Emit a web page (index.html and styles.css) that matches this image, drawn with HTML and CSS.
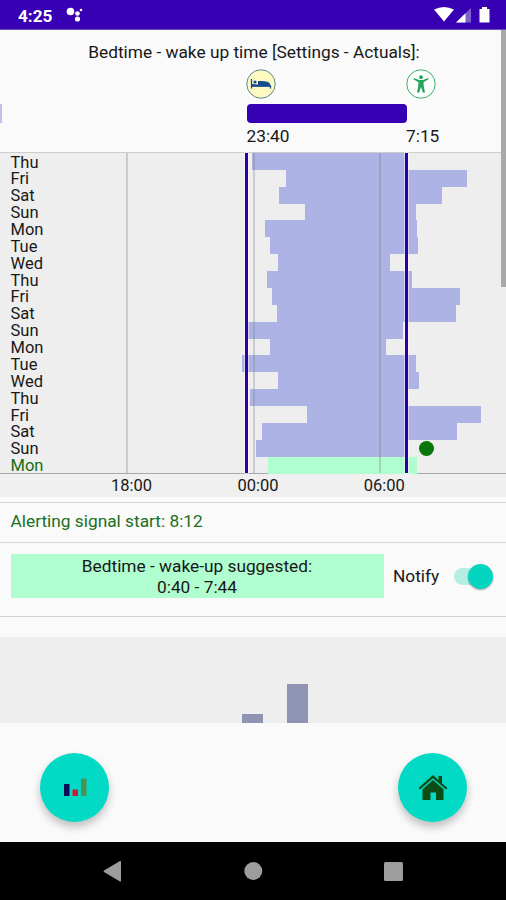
FILE: index.html
```html
<!DOCTYPE html>
<html lang="en">
<head>
<meta charset="utf-8">
<title>Bedtime</title>
<link rel="stylesheet" href="styles.css">
</head>
<body>
<div class="phone">
  <header class="status">
    <span class="clock">4:25</span>
    <svg class="dots" width="18" height="16" viewBox="0 0 18 16" fill="#fff"><circle cx="4.500" cy="4.500" r="3.800"/><circle cx="11.500" cy="6.500" r="2.300"/><circle cx="11.500" cy="12" r="2.600"/><circle cx="15" cy="3" r="1.300"/></svg>
    <svg class="signals" width="58" height="18" viewBox="0 0 58 18"><path d="M0 3.500Q10 -1.500 20 3.500L10 15.500Z" fill="#fff"/><path d="M22 16.500L37 2V16.500Z" fill="#7f5fd0"/><path d="M22 16.500L31.500 7.300V16.500Z" fill="#fff"/><path d="M45.500 3H48V1H53V3H55.500V16.500H45.500Z" fill="#fff"/></svg>
  </header>

  <main class="content">
    <section class="planned">
      <h1 class="title">Bedtime - wake up time [Settings - Actuals]:</h1>
      <div class="icons">
        <svg width="30" height="30" viewBox="0 0 30 30"><circle cx="15" cy="15" r="14.200" fill="#fdfbc2" stroke="#5b8a91"/><path d="M5.500 10V19.500M5.500 17H24.500V19.500" fill="none" stroke="#174b91" stroke-width="1.300"/><circle cx="9" cy="13" r="1.600" fill="#174b91"/><path d="M6 15L12 15.500V12Q18 11.500 22 13Q24.500 14 24.500 17.500H6Z" fill="#174b91"/></svg>
        <svg width="30" height="30" viewBox="0 0 30 30"><circle cx="15" cy="15" r="14.200" fill="#fdfffd" stroke="#3fae70"/><circle cx="15" cy="8.200" r="1.900" fill="#22a45a"/><path d="M7.800 9L13 11H17L22.200 9L22.500 10.200L17.500 13.300L17.800 17.500L19 23.500H16.800L15 17.800L13.200 23.500H11L12.200 17.500L12.500 13.300L7.500 10.200Z" fill="#22a45a"/></svg>
      </div>
      <div class="track"><span class="previous"></span><span class="sleep"></span></div>
      <div class="times"><span>23:40</span><span>7:15</span></div>
    </section>

    <section class="history">
      <div class="rows" id="rows"></div>
      <i class="grid g18"></i><i class="grid g00"></i><i class="grid g06"></i>
      <i class="limit bed"></i><i class="limit wake"></i>
      <i class="signal"></i>
    </section>
    <div class="axis"><span>18:00</span><span>00:00</span><span>06:00</span></div>

    <div class="alert">Alerting signal start: 8:12</div>
    <div class="suggest">
      <div class="hint">Bedtime - wake-up suggested:<br>0:40 - 7:44</div>
      <span class="notify">Notify</span>
      <span class="switch"><i class="knob"></i></span>
    </div>
    <div class="histogram"><i class="column low"></i><i class="column high"></i></div>
    <i class="scrollbar"></i>
  </main>

  <div class="actions">
    <div class="fab"><svg width="28" height="28" viewBox="0 0 28 28"><path d="M3 10H8.500V22H3Z" fill="#0b0e57"/><path d="M11.500 15.500H17V22H11.500Z" fill="#d01832"/><path d="M20 4.500H25.500V22H20Z" fill="#4d9255"/></svg></div>
    <div class="fab"><svg width="30" height="28" viewBox="0 0 30 28" fill="#0c4d16"><path d="M15 1L20.500 6V2H24V9.200L29.500 14L28 15.500L15 4.300L2 15.500L.5 14Z"/><path d="M15 6L25.500 15.200V26H18V18.500H12.500V26H4.500V15.200Z"/></svg></div>
  </div>

  <nav class="nav">
    <svg width="506" height="58" viewBox="0 0 506 58" fill="#9d9d9d"><path d="M104 28.500L120 19Q121 18.500 121 20V38.500Q121 40 120 39.400L104 30Q103 29.200 104 28.500Z"/><circle cx="253.300" cy="29" r="9"/><rect x="384" y="20" width="19" height="19" rx="1.500"/></svg>
  </nav>
</div>
<script src="rows.js"></script>
</body>
</html>
```
FILE: rows.js
```js
// Day label, left edge and right edge of each night's bar on the time axis.
const nights = [
  ["Thu", 252, 406], ["Fri", 286, 467.3], ["Sat", 278.7, 442], ["Sun", 305.3, 416],
  ["Mon", 265.2, 417.5], ["Tue", 269.5, 418], ["Wed", 278, 390], ["Thu", 266.5, 412.3],
  ["Fri", 272, 460], ["Sat", 276.7, 456], ["Sun", 248, 402.7], ["Mon", 270, 385.7],
  ["Tue", 242, 415.5], ["Wed", 278, 419], ["Thu", 250, 406], ["Fri", 306.5, 480.5],
  ["Sat", 262, 457.3], ["Sun", 255.5, 406], ["Mon", 268, 416.7]
];
const labelWidth = 60;
document.getElementById("rows").innerHTML = nights.map(([day, from, to], i) =>
  `<div class="row${i === nights.length - 1 ? " next" : ""}"><span class="day">${day}</span>` +
  `<span class="bar" style="margin-left:${from - labelWidth}px;width:${to - from}px"></span></div>`
).join("");
```
FILE: styles.css
```css
* { box-sizing: border-box; }
body { margin: 0; font-family: Roboto, "Liberation Sans", sans-serif; font-size: 17.3px; color: #181818; background: #fafafa; }
svg { display: block; }
.phone { width: 506px; height: 900px; display: flex; flex-direction: column; overflow: hidden; background: #fafafa; }
.status { height: 30px; flex: none; background: #3700b3; color: #fff; display: flex; align-items: center; padding: 0 14.500px 0 18px; border-bottom: 1px solid #6a49c6; }
.clock { font-size: 17.2px; font-weight: 700; line-height: 30px; padding-top: 2px; }
.dots { margin-left: 13.500px; margin-top: 1px; }
.signals { margin-left: auto; }
.content { position: relative; height: 693px; flex: none; display: flex; flex-direction: column; }
.scrollbar { position: absolute; right: 0; top: 0; width: 5px; height: 257px; background: #a9a9a9; }

.planned { height: 122px; display: flex; flex-direction: column; }
.title { margin: 12px 0 0; font-size: 17.3px; font-weight: 400; line-height: 20px; text-align: center; padding-left: 2px; }
.icons { display: flex; gap: 130px; margin: 7px 0 0 246px; }
.track { display: flex; margin-top: 5px; height: 19px; }
.previous { width: 2px; background: #c8bce8; }
.sleep { width: 160px; margin-left: 244.500px; border-radius: 4px; background: #3700b3; }
.times { display: flex; padding: 3px 0 0 246.500px; line-height: 20px; }
.times span { width: 159.500px; flex: none; }

.history { position: relative; height: 322px; flex: none; background: #eee; border-top: 1px solid #cdcdcd; border-bottom: 1px solid #a8a8a8; }
.rows { display: grid; grid-template-rows: repeat(19, 1fr); height: 320.500px; }
.row { display: flex; min-height: 0; }
.day { width: 60px; padding: 1.500px 0 0 10.500px; flex: none; font-size: 16.5px; line-height: 16px; }
.bar { background: #adb4e5; flex: none; }
.next .day { color: #146c14; }
.next .bar { background: #b0fdcf; }
.grid { position: absolute; top: 0; bottom: 0; width: 2px; background: rgba(110, 110, 110, .27); }
.g18 { left: 126px; }
.g00 { left: 252.500px; }
.g06 { left: 379px; }
.limit { position: absolute; top: 0; bottom: 0; width: 3px; background: #2b00a8; box-shadow: 0 0 0 1px rgba(255, 255, 255, .45); }
.bed { left: 245px; }
.wake { left: 405px; }
.signal { position: absolute; left: 419px; top: 288px; width: 15px; height: 15px; border-radius: 50%; background: #097609; }
.axis { height: 23px; flex: none; background: #f0f0f0; display: flex; padding-left: 111px; font-size: 16.500px; line-height: 23px; }
.axis span { width: 126.400px; }

.alert { margin-top: 5px; height: 41px; flex: none; border-top: 1px solid #d8d8d8; border-bottom: 1px solid #d8d8d8; padding-left: 10.500px; line-height: 37px; color: #207020; }
.suggest { height: 74px; flex: none; border-bottom: 1px solid #d2d2d2; display: flex; align-items: flex-start; padding: 11px 0 0 10.500px; }
.hint { width: 373px; flex: none; height: 44px; background: #b0fdcf; text-align: center; line-height: 20.500px; padding-top: 2px; }
.notify { margin-left: 9.500px; width: 46px; flex: none; line-height: 45px; }
.switch { margin: 14px 0 0 14.500px; width: 36px; height: 17px; border-radius: 9px; background: #b6eee4; position: relative; }
.knob { position: absolute; right: -3px; top: -4.500px; width: 25px; height: 25px; border-radius: 50%; background: #03d5c0; box-shadow: 0 1px 2px rgba(0, 0, 0, .35); }
.histogram { margin-top: 20px; height: 86px; flex: none; background: #eee; display: flex; align-items: flex-end; padding-left: 242px; gap: 24px; }
.column { width: 21px; background: #9094b3; }
.low { height: 9px; }
.high { height: 39px; }

.actions { height: 119px; flex: none; display: flex; justify-content: space-between; padding: 30px 39px 0 40px; }
.fab { width: 69px; height: 69px; border-radius: 50%; background: #03dac5; display: flex; align-items: center; justify-content: center; box-shadow: 0 5px 9px rgba(0, 0, 0, .24); }
.nav { height: 58px; flex: none; background: #000; }
```
